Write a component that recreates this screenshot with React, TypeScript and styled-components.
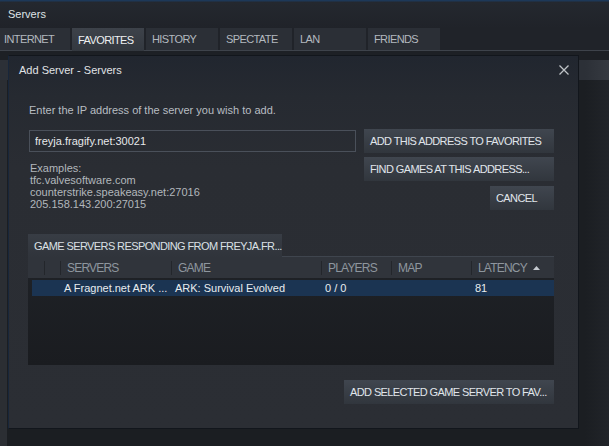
import React from 'react';
import styled, { createGlobalStyle, css } from 'styled-components';

const GlobalStyle = createGlobalStyle`
  html, body {
    margin: 0;
    padding: 0;
    background: #1b1e22;
  }
  body {
    font-family: "Liberation Sans", Arial, sans-serif;
    font-size: 11px;
  }
  * {
    box-sizing: border-box;
  }
`;

const caps = css`
  text-transform: uppercase;
  font-size: 11px;
  letter-spacing: -0.6px;
  white-space: nowrap;
`;

const Window = styled.div`
  position: relative;
  width: 609px;
  height: 446px;
  overflow: hidden;
  display: flex;
  flex-direction: column;
  background: #1b1e22;
  color: #b6bbc0;
`;

const TitleBar = styled.div`
  flex: none;
  height: 28px;
  display: flex;
  align-items: center;
  padding-left: 8px;
  color: #dfe2e5;
  background: linear-gradient(to bottom, #1d3858 0, #1d3858 1px, #24282f 2px, #202329 100%);
`;

const TabRow = styled.div`
  flex: none;
  height: 23px;
  display: flex;
  gap: 2px;
  margin-left: -2px;
  background: #202329;
  border-bottom: 1px solid #3e434b;
`;

const Tab = styled.div<{ $active?: boolean }>`
  ${caps}
  width: 72px;
  height: 22px;
  display: flex;
  align-items: center;
  padding-left: 6px;
  color: ${(p) => (p.$active ? '#eef0f2' : '#b3b9bf')};
  background: ${(p) =>
    p.$active ? 'linear-gradient(to bottom, #3d424a, #33383f)' : '#2b2f36'};
  ${(p) =>
    p.$active &&
    css`
      height: 23px;
      margin-bottom: -1px;
    `}
`;

const Backdrop = styled.div`
  flex: 1;
  display: flex;
  flex-direction: column;
`;

const BackdropGap = styled.div`
  height: 9px;
  background: #1d2025;
`;

const BackdropHeader = styled.div`
  height: 20px;
  background: linear-gradient(to right, #2c3037 0, #2c3037 585px, #30343b 595px, #363a41 100%);
`;

const BackdropBody = styled.div`
  flex: 1;
  background: linear-gradient(
    to right,
    #2b2e33 0,
    #2b2e33 7px,
    #1b1e22 7px,
    #1b1e22 585px,
    #212429 100%
  );
`;

const Dialog = styled.div`
  position: absolute;
  left: 8px;
  top: 55px;
  width: 571px;
  height: 374px;
  display: flex;
  flex-direction: column;
  border: 1px solid #12161c;
  border-left-color: #18263a;
  background: linear-gradient(
    to bottom,
    #21262f 0,
    #262a31 40px,
    #2a2d33 110px,
    #2b2e34 100%
  );
`;

const DialogHeader = styled.div`
  height: 28px;
  display: flex;
  align-items: center;
  justify-content: space-between;
  padding: 0 9px 0 10px;
  color: #e0e3e6;
`;

const CloseButton = styled.button`
  width: 10px;
  height: 10px;
  padding: 0;
  border: 0;
  background: none;
  display: flex;
  color: #bfc3c7;
  cursor: pointer;
`;

const DialogBody = styled.div`
  display: flex;
  flex-direction: column;
  padding: 0 24px 0 19px;
`;

const Prompt = styled.div`
  margin-top: 19px;
  padding-left: 1px;
  line-height: 14px;
  color: #b8bdc2;
`;

const FormGrid = styled.div`
  margin-top: 12px;
  display: grid;
  grid-template-columns: 328px 1fr;
  column-gap: 8px;
`;

const LeftColumn = styled.div`
  display: flex;
  flex-direction: column;
`;

const AddressInput = styled.input`
  margin: 1px 0 0 1px;
  width: 327px;
  height: 22px;
  padding: 0 5px;
  border: 1px solid #4a505a;
  background: transparent;
  color: #e6e8ea;
  font-family: inherit;
  font-size: 11px;
  outline: none;
`;

const Examples = styled.div`
  margin-top: 10px;
  padding-left: 2px;
  line-height: 12px;
  color: #b2b7bc;
`;

const ButtonColumn = styled.div`
  display: flex;
  flex-direction: column;
  align-items: flex-end;
  gap: 4px;
`;

const Button = styled.button<{ $width?: number }>`
  ${caps}
  width: ${(p) => (p.$width ? `${p.$width}px` : '100%')};
  height: 24px;
  display: flex;
  align-items: center;
  padding: 0 0 0 6px;
  border: 0;
  font-family: inherit;
  color: #e0e5eb;
  background: linear-gradient(to bottom, #40464f, #31363d);
  cursor: pointer;
`;

const CancelButton = styled(Button)`
  margin-top: 1px;
`;

const TabStrip = styled.div`
  margin-top: 24px;
  display: flex;
  align-items: flex-end;
`;

const ResultsTab = styled.div`
  ${caps}
  width: 254px;
  height: 23px;
  display: flex;
  align-items: center;
  padding-left: 6px;
  padding-top: 1px;
  color: #dbe0e5;
  background: linear-gradient(to bottom, #383d45, #30343b);
`;

const TabFiller = styled.div`
  flex: 1;
  border-bottom: 1px solid #3f454e;
`;

const Table = styled.div`
  height: 108px;
  display: flex;
  flex-direction: column;
  background: linear-gradient(to bottom, #1f2227, #1a1c20);
`;

const columns = '111px 150px 70px 80px 1fr';

const HeaderRow = styled.div`
  height: 21px;
  display: grid;
  grid-template-columns: 16px 16px ${columns};
  align-items: center;
  background: #30343b;
`;

const HeaderCell = styled.div<{ $divider?: boolean }>`
  height: 14px;
  display: flex;
  align-items: center;
  padding-left: 6px;
  font-size: 12px;
  letter-spacing: -0.8px;
  color: #8e969e;
  white-space: nowrap;
  border-left: ${(p) => (p.$divider ? '1px solid #23262b' : '0')};
`;

const SortArrow = styled.svg`
  margin-left: 6px;
  flex: none;
`;

const DataRow = styled.div<{ $selected?: boolean }>`
  margin: 2px 0 0 4px;
  height: 16px;
  display: grid;
  grid-template-columns: 12px 16px ${columns};
  align-items: center;
  background: ${(p) => (p.$selected ? '#1b3452' : 'transparent')};
  color: #e8ecef;
`;

const DataCell = styled.div`
  padding-left: 4px;
  white-space: nowrap;
  overflow: hidden;
`;

const Footer = styled.div`
  margin-top: 15px;
  display: flex;
  justify-content: flex-end;
`;

const servers = [
  {
    name: 'A Fragnet.net ARK ...',
    game: 'ARK: Survival Evolved',
    players: '0 / 0',
    map: '',
    latency: '81',
  },
];

const tabs = ['Internet', 'Favorites', 'History', 'Spectate', 'LAN', 'Friends'];

export default function App() {
  return (
    <Window>
      <GlobalStyle />
      <TitleBar>Servers</TitleBar>
      <TabRow>
        {tabs.map((t) => (
          <Tab key={t} $active={t === 'Favorites'}>
            {t}
          </Tab>
        ))}
      </TabRow>
      <Backdrop>
        <BackdropGap />
        <BackdropHeader />
        <BackdropBody />
      </Backdrop>

      <Dialog>
        <DialogHeader>
          <span>Add Server - Servers</span>
          <CloseButton aria-label="Close">
            <svg width="10" height="10" viewBox="0 0 10 10">
              <path d="M0.5 0.5 L9.5 9.5 M9.5 0.5 L0.5 9.5" stroke="currentColor" strokeWidth="1.3" />
            </svg>
          </CloseButton>
        </DialogHeader>
        <DialogBody>
          <Prompt>Enter the IP address of the server you wish to add.</Prompt>
          <FormGrid>
            <LeftColumn>
              <AddressInput defaultValue="freyja.fragify.net:30021" />
              <Examples>
                Examples:
                <br />
                tfc.valvesoftware.com
                <br />
                counterstrike.speakeasy.net:27016
                <br />
                205.158.143.200:27015
              </Examples>
            </LeftColumn>
            <ButtonColumn>
              <Button>Add this address to favorites</Button>
              <Button>Find games at this address...</Button>
              <CancelButton $width={64}>Cancel</CancelButton>
            </ButtonColumn>
          </FormGrid>

          <TabStrip>
            <ResultsTab>Game servers responding from freyja.fr...</ResultsTab>
            <TabFiller />
          </TabStrip>
          <Table>
            <HeaderRow>
              <HeaderCell />
              <HeaderCell $divider />
              <HeaderCell $divider>SERVERS</HeaderCell>
              <HeaderCell $divider>GAME</HeaderCell>
              <HeaderCell $divider>PLAYERS</HeaderCell>
              <HeaderCell $divider>MAP</HeaderCell>
              <HeaderCell $divider>
                LATENCY
                <SortArrow width="7" height="4" viewBox="0 0 7 4">
                  <polygon points="0,4 3.5,0 7,4" fill="#c5cad0" />
                </SortArrow>
              </HeaderCell>
            </HeaderRow>
            {servers.map((s) => (
              <DataRow key={s.name} $selected>
                <DataCell />
                <DataCell />
                <DataCell>{s.name}</DataCell>
                <DataCell>{s.game}</DataCell>
                <DataCell>{s.players}</DataCell>
                <DataCell>{s.map}</DataCell>
                <DataCell>{s.latency}</DataCell>
              </DataRow>
            ))}
          </Table>
          <Footer>
            <Button $width={210}>Add selected game server to fav...</Button>
          </Footer>
        </DialogBody>
      </Dialog>
    </Window>
  );
}
